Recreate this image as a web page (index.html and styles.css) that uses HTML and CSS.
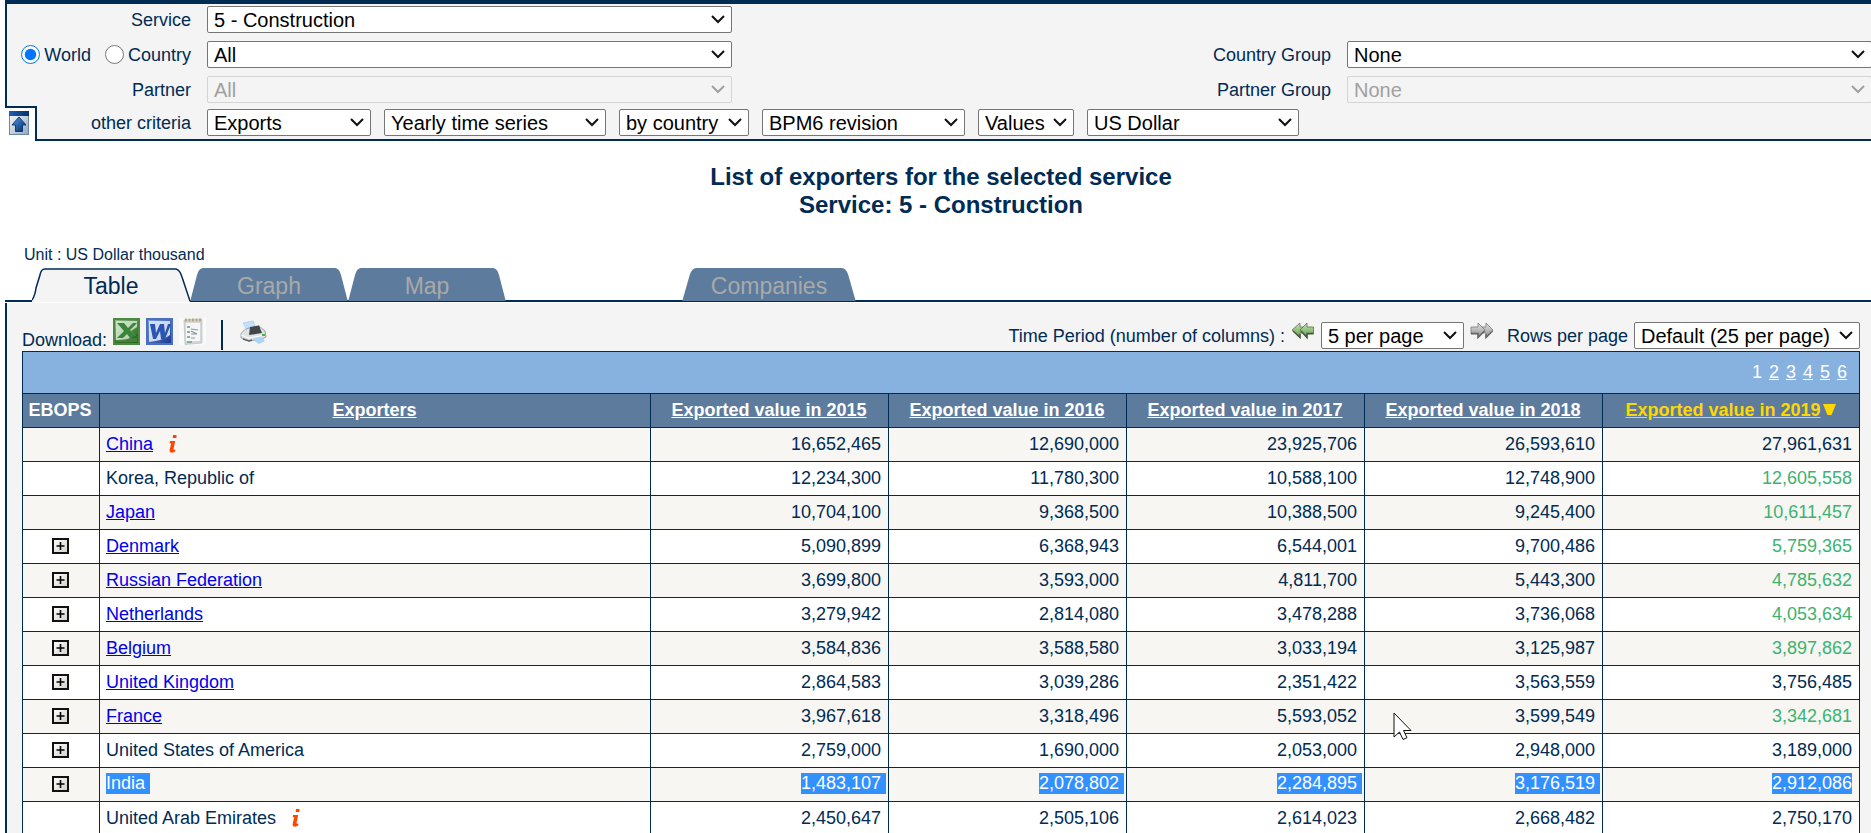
FILE: index.html
```html
<!DOCTYPE html>
<html lang="en">
<head>
<meta charset="utf-8">
<title>List of exporters for the selected service</title>
<link rel="stylesheet" href="styles.css">
</head>
<body>
<svg class="defs" aria-hidden="true">
  <defs>
    <linearGradient id="g-plus" x1="0" y1="0" x2="1" y2="1"><stop offset="0" stop-color="#ffffff"/><stop offset="1" stop-color="#d2cfc8"/></linearGradient>
    <linearGradient id="g-up" x1="0" y1="0" x2="1" y2="1"><stop offset="0" stop-color="#ffffff"/><stop offset="1" stop-color="#8fa6c0"/></linearGradient>
    <linearGradient id="g-bar" x1="0" y1="0" x2="1" y2="0"><stop offset="0" stop-color="#1c5fb5"/><stop offset="1" stop-color="#0a2f66"/></linearGradient>
    <linearGradient id="g-arrow" x1="0" y1="0" x2="1" y2="1"><stop offset="0" stop-color="#4fa0f5"/><stop offset="1" stop-color="#08244f"/></linearGradient>
    <linearGradient id="g-xls" x1="0" y1="0" x2="1" y2="1"><stop offset="0" stop-color="#8fc08a"/><stop offset="1" stop-color="#1f5c12"/></linearGradient>
    <linearGradient id="g-doc" x1="0" y1="0" x2="1" y2="1"><stop offset="0" stop-color="#7da2e8"/><stop offset="1" stop-color="#14368c"/></linearGradient>
    <linearGradient id="g-green" x1="0" y1="0" x2="0" y2="1"><stop offset="0" stop-color="#c4e6ac"/><stop offset="1" stop-color="#5d9a4c"/></linearGradient>
    <linearGradient id="g-grey" x1="0" y1="0" x2="0" y2="1"><stop offset="0" stop-color="#e4e4e4"/><stop offset="1" stop-color="#8a8a8a"/></linearGradient>
    <symbol id="plus" viewBox="0 0 17 16"><rect x="1" y="1" width="15" height="14" fill="url(#g-plus)" stroke="#111" stroke-width="2"/><path d="M8.500 4v8M4.500 8h8" stroke="#000" stroke-width="1.600"/></symbol>
    <symbol id="info" viewBox="0 0 8 18"><path d="M4 0h3.500v3H3.700zM1 6h5.200L4.600 13.500c-.2 1.200.3 1.500 1.900.9L6.100 16.600C3.500 18.500.3 18 .6 15.200L2.200 8.200H.6z" fill="#ff4500"/></symbol>
    <symbol id="tab-off" viewBox="0 0 158 34" preserveAspectRatio="none"><path d="M0 34 L7 7 Q9 0 13 0 H145 Q149 0 151 7 L158 34Z" fill="#5d7b9d"/><path d="M0 33.500H158" stroke="#002b54"/></symbol>
    <symbol id="tab-on" viewBox="0 0 158 34" preserveAspectRatio="none"><path d="M0 34V32 L7 7 Q9 1 13 1 H144 Q148 1 150 7 L158 34Z" fill="#f4f4f4"/><path d="M0 32 Q3 28 4 20 L8 7 Q9 1 13 1 H144 Q148 2 150 9 L158 33" fill="none" stroke="#002b54" stroke-width="1.500"/></symbol>
  </defs>
</svg>

<form class="filters">
  <div class="filters-main">
    <div class="row">
      <label class="name" for="service">Service</label>
      <select id="service"><option>5 - Construction</option></select>
    </div>
    <div class="row">
      <div class="scope">
        <label><input type="radio" name="scope" checked>World</label>
        <label><input type="radio" name="scope">Country</label>
      </div>
      <select aria-label="Country"><option>All</option></select>
      <label class="name" for="cgroup">Country Group</label>
      <select id="cgroup"><option>None</option></select>
    </div>
    <div class="row">
      <label class="name" for="partner">Partner</label>
      <select id="partner" disabled><option>All</option></select>
      <label class="name" for="pgroup">Partner Group</label>
      <select id="pgroup" disabled><option>None</option></select>
    </div>
  </div>
  <div class="filters-more">
    <button type="button" class="fold" aria-label="Hide criteria">
      <svg width="20" height="24" viewBox="0 0 20 24"><rect x=".5" y=".5" width="19" height="23" fill="url(#g-up)" stroke="#6d86aa"/><rect width="20" height="5" fill="url(#g-bar)"/><path d="M10 6l7 8h-3.500v6.500h-7V14H3z" fill="url(#g-arrow)" stroke="#0d3c7c"/></svg>
    </button>
    <div class="criteria">
      <label class="name" for="flow">other criteria</label>
      <div class="choices">
        <select id="flow" class="w-flow"><option>Exports</option></select>
        <select class="w-series" aria-label="Series"><option>Yearly time series</option></select>
        <select class="w-by" aria-label="Grouping"><option>by country</option></select>
        <select class="w-rev" aria-label="Revision"><option>BPM6 revision</option></select>
        <select class="w-kind" aria-label="Indicator"><option>Values</option></select>
        <select class="w-cur" aria-label="Currency"><option>US Dollar</option></select>
      </div>
    </div>
  </div>
</form>

<h1>List of exporters for the selected service<br>Service: 5 - Construction</h1>

<p class="unit">Unit : US Dollar thousand</p>

<nav class="tabs">
  <button type="button" class="tab on"><svg><use href="#tab-on"/></svg><span>Table</span></button>
  <button type="button" class="tab"><svg><use href="#tab-off"/></svg><span>Graph</span></button>
  <button type="button" class="tab"><svg><use href="#tab-off"/></svg><span>Map</span></button>
  <button type="button" class="tab far"><svg><use href="#tab-off"/></svg><span>Companies</span></button>
</nav>

<main class="panel">
  <div class="toolbar">
    <div class="download">
      <span>Download:</span>
      <button type="button" aria-label="Excel"><svg width="27" height="27" viewBox="0 0 27 27"><rect x="1" y="1" width="25" height="25" fill="url(#g-xls)" stroke="#4c8a41" stroke-width="2"/><path d="M3 3h21v6l-6 4 6 6v5H3z" fill="#e4f0df" opacity=".75"/><path d="M4 5h7l4 5 5-5h4l-7 7 8 8h-8l-3-4-4 4H4l7-7z" fill="#39853a"/><path d="M2 22c9 0 16-1 23-6v9H2z" fill="#2c6a20" opacity=".8"/></svg></button>
      <button type="button" aria-label="Word"><svg width="27" height="27" viewBox="0 0 27 27"><rect x="1" y="1" width="25" height="25" fill="url(#g-doc)" stroke="#4c6fc0" stroke-width="2"/><path d="M3 3h21v14c-6 4-12 6-21 7z" fill="#e6edfb" opacity=".85"/><path d="M4 6h5l1 9 4-9h4l1 9 3-9h3l-6 15h-4l-1-8-4 8H7z" fill="#2a55b0"/></svg></button>
      <button type="button" aria-label="Text"><svg width="27" height="27" viewBox="0 0 27 27"><rect width="27" height="27" fill="#fafafa"/><path d="M5 2l18-1v24l-17 1.500z" fill="#d3d7da" stroke="#b9bec2" stroke-width=".7"/><path d="M7 5h14v18H7z" fill="#f4f6f7"/><path d="M6 2h17" stroke="#b9a878" stroke-width="3" stroke-dasharray="2 1.500"/><path d="M8 9h3M8 14h3M8 19h3M8 24h5" stroke="#86b09a" stroke-width="1.800"/><path d="M12 11l7 1M12 13l6 3M12 16h6M12 20h4" stroke="#8d959b" stroke-width="1.200"/></svg></button>
      <i class="bar"></i>
      <button type="button" aria-label="Print"><svg width="27" height="25" viewBox="0 0 27 25"><path d="M3 3l10-2 3 7-8 4z" fill="#c3e1fb" stroke="#9cc4e8" stroke-width=".6"/><path d="M1 14c2-4 5-5 8-6l10-2 6 5 1 6-4 2-13 2-8-3z" fill="#dfe1e2" stroke="#8b8f92" stroke-width=".8"/><path d="M10 7l9-1.500 3 7.500-13 2z" fill="#43474a"/><path d="M1 15l8 3 16-3" fill="none" stroke="#fff"/><path d="M3 19l6 2 3-1" fill="none" stroke="#5d6163" stroke-width="1.500"/><path d="M12 19l9-2 4 4-6 3z" fill="#a9d4fa"/><rect x="22" y="14" width="3" height="2" fill="#41b83c"/></svg></button>
    </div>
    <div class="paging">
      <label for="cols">Time Period (number of columns) :</label>
      <button type="button" aria-label="Previous years"><svg width="24" height="18" viewBox="0 0 24 18"><g stroke="#5f6f58" stroke-width=".8"><path d="M1 8l8-7v4h4v6H9v5z" fill="url(#g-green)"/><path d="M9 8l7-7v4h6.500v7H16v4z" fill="url(#g-green)"/></g><path d="M2 9l7 6.500v-3.500M10 9l6 6.500v-4h6.500" fill="none" stroke="#4c5647" stroke-width="1.500"/></svg></button>
      <select id="cols" class="w-cols"><option>5 per page</option></select>
      <button type="button" aria-label="Next years"><svg width="24" height="18" viewBox="0 0 24 18"><g stroke="#777" stroke-width=".8"><path d="M23 8l-7-7v4h-5v6h5v5z" fill="url(#g-grey)"/><path d="M15 8L8 1v4H1v7h7v4z" fill="url(#g-grey)"/></g><path d="M22.500 9L16 15.500V12M14.500 9L8 15.500v-4H1" fill="none" stroke="#666" stroke-width="1.500"/></svg></button>
      <label class="rows" for="rows">Rows per page</label>
      <select id="rows" class="w-rows"><option>Default (25 per page)</option></select>
    </div>
  </div>

  <table>
    <colgroup><col class="c-code"><col><col class="c-val"><col class="c-val"><col class="c-val"><col class="c-val"><col class="c-last"></colgroup>
    <thead>
      <tr class="pages"><td colspan="7"><div><span>1</span><a href="#">2</a><a href="#">3</a><a href="#">4</a><a href="#">5</a><a href="#">6</a></div></td></tr>
      <tr><th>EBOPS</th><th><a href="#">Exporters</a></th><th><a href="#">Exported value in 2015</a></th><th><a href="#">Exported value in 2016</a></th><th><a href="#">Exported value in 2017</a></th><th><a href="#">Exported value in 2018</a></th><th class="sorted"><a href="#">Exported value in 2019</a><svg width="15" height="12" viewBox="0 0 15 12"><path d="M2 0h13L10.500 11h-4z" fill="#ffd700"/></svg></th></tr>
    </thead>
    <tbody>
      <tr><td></td><td><a href="#">China</a><svg class="info"><use href="#info"/></svg></td><td>16,652,465</td><td>12,690,000</td><td>23,925,706</td><td>26,593,610</td><td>27,961,631</td></tr>
      <tr><td></td><td>Korea, Republic of</td><td>12,234,300</td><td>11,780,300</td><td>10,588,100</td><td>12,748,900</td><td class="est">12,605,558</td></tr>
      <tr><td></td><td><a href="#">Japan</a></td><td>10,704,100</td><td>9,368,500</td><td>10,388,500</td><td>9,245,400</td><td class="est">10,611,457</td></tr>
      <tr><td><button type="button" aria-label="Expand"><svg><use href="#plus"/></svg></button></td><td><a href="#">Denmark</a></td><td>5,090,899</td><td>6,368,943</td><td>6,544,001</td><td>9,700,486</td><td class="est">5,759,365</td></tr>
      <tr><td><button type="button" aria-label="Expand"><svg><use href="#plus"/></svg></button></td><td><a href="#">Russian Federation</a></td><td>3,699,800</td><td>3,593,000</td><td>4,811,700</td><td>5,443,300</td><td class="est">4,785,632</td></tr>
      <tr><td><button type="button" aria-label="Expand"><svg><use href="#plus"/></svg></button></td><td><a href="#">Netherlands</a></td><td>3,279,942</td><td>2,814,080</td><td>3,478,288</td><td>3,736,068</td><td class="est">4,053,634</td></tr>
      <tr><td><button type="button" aria-label="Expand"><svg><use href="#plus"/></svg></button></td><td><a href="#">Belgium</a></td><td>3,584,836</td><td>3,588,580</td><td>3,033,194</td><td>3,125,987</td><td class="est">3,897,862</td></tr>
      <tr><td><button type="button" aria-label="Expand"><svg><use href="#plus"/></svg></button></td><td><a href="#">United Kingdom</a></td><td>2,864,583</td><td>3,039,286</td><td>2,351,422</td><td>3,563,559</td><td>3,756,485</td></tr>
      <tr><td><button type="button" aria-label="Expand"><svg><use href="#plus"/></svg></button></td><td><a href="#">France</a></td><td>3,967,618</td><td>3,318,496</td><td>5,593,052</td><td>3,599,549</td><td class="est">3,342,681</td></tr>
      <tr><td><button type="button" aria-label="Expand"><svg><use href="#plus"/></svg></button></td><td>United States of America</td><td>2,759,000</td><td>1,690,000</td><td>2,053,000</td><td>2,948,000</td><td>3,189,000</td></tr>
      <tr class="picked"><td><button type="button" aria-label="Expand"><svg><use href="#plus"/></svg></button></td><td><span>India</span></td><td><span>1,483,107</span></td><td><span>2,078,802</span></td><td><span>2,284,895</span></td><td><span>3,176,519</span></td><td><span>2,912,086</span></td></tr>
      <tr><td></td><td>United Arab Emirates<svg class="info"><use href="#info"/></svg></td><td>2,450,647</td><td>2,505,106</td><td>2,614,023</td><td>2,668,482</td><td>2,750,170</td></tr>
    </tbody>
  </table>
</main>

<svg class="pointer" width="19" height="28" viewBox="0 0 19 28"><path d="M1 1v24l5.500-5 3.500 7.500 4-1.800L10.500 18.500H18z" fill="#fff" stroke="#111"/></svg>
</body>
</html>
```
FILE: styles.css
```css
* { box-sizing: border-box; }

html { overflow: hidden; }

body {
  margin: 0;
  padding-left: 5px;
  background: #fff;
  color: #002b54;
  font: 18px/20px "Liberation Sans", Arial, sans-serif;
}

.defs { position: absolute; width: 0; height: 0; }

button {
  padding: 0;
  border: 0;
  background: none;
  font: inherit;
  color: inherit;
}

button svg { display: block; }

select {
  height: 27px;
  margin: 0;
  padding: 0 6px;
  appearance: none;
  border: 1px solid #767676;
  border-radius: 2px;
  background: #fff url("data:image/svg+xml,%3Csvg xmlns='http://www.w3.org/2000/svg' width='14' height='9'%3E%3Cpath d='M1 1l6 6 6-6' fill='none' stroke='%23111' stroke-width='2'/%3E%3C/svg%3E") no-repeat right 6px center;
  color: #000;
  font: 20px "Liberation Sans", Arial, sans-serif;
}

select:disabled {
  border-color: #d4d4d4;
  background-color: #f4f4f4;
  background-image: url("data:image/svg+xml,%3Csvg xmlns='http://www.w3.org/2000/svg' width='14' height='9'%3E%3Cpath d='M1 1l6 6 6-6' fill='none' stroke='%23a0a0a0' stroke-width='2'/%3E%3C/svg%3E");
  color: #a0a0a0;
  opacity: 1;
}

/* Filters */
.filters { border-top: 4px solid #002b54; }

.filters-main {
  display: grid;
  gap: 8px;
  padding: 2px 0 3px;
  border-left: 2px solid #002b54;
  background: #f4f4f4;
}

.row {
  display: grid;
  grid-template-columns: 184px 525px 1fr 525px;
  column-gap: 16px;
  align-items: center;
  margin-right: -1px;
}

.name { text-align: right; }

.scope {
  display: flex;
  justify-content: flex-end;
  gap: 14px;
}

.scope label { display: flex; align-items: center; gap: 4px; }

.scope input { width: 19px; height: 19px; margin: 0; }

.filters-more { display: flex; background: #f4f4f4; }

.fold {
  display: flex;
  width: 32px;
  padding: 3px 4px;
  border: solid #002b54;
  border-width: 2px 2px 0 0;
  background: #fff;
}

.criteria {
  display: grid;
  flex: 1;
  grid-template-columns: 154px 1fr;
  column-gap: 16px;
  align-items: center;
  padding: 3px 0;
  border-bottom: 2px solid #002b54;
}

.choices { display: flex; gap: 13px; }

.w-flow { width: 164px; }
.w-series { width: 222px; }
.w-by { width: 130px; }
.w-rev { width: 203px; }
.w-kind { width: 96px; }
.w-cur { width: 212px; }
.w-cols { width: 143px; }
.w-rows { width: 226px; }

/* Heading */
h1 {
  margin: 22px 0 27px;
  padding-left: 6px;
  font-size: 24px;
  line-height: 28px;
  text-align: center;
}

.unit {
  margin: 0 0 4px 19px;
  font-size: 16px;
  line-height: 18px;
}

/* Tabs */
.tabs {
  display: flex;
  padding-left: 27px;
  border-bottom: 2px solid #002b54;
}

.tab {
  display: grid;
  width: 158px;
  height: 34px;
  margin-bottom: -2px;
  color: #a9a9a9;
  font-size: 23px;
  line-height: 36px;
}

.tab > * { grid-area: 1 / 1; }
.tab svg { width: 100%; height: 34px; }
.tab.on { color: #002b54; }
.tab.far { width: 174px; margin-left: 176px; }

/* Panel */
.panel {
  margin-top: 1px;
  padding: 0 11px 0 15px;
  border-left: 2px solid #002b54;
  background: #f4f4f4;
}

.toolbar {
  display: flex;
  justify-content: space-between;
  align-items: flex-end;
  height: 48px;
}

.download { display: flex; align-items: flex-end; gap: 6px; padding-bottom: 1px; }
.download button { margin-bottom: 5px; }
.download .bar { width: 2px; height: 30px; margin: 0 11px 0 9px; background: #002b54; }

.paging { display: flex; align-items: center; gap: 6px; padding-bottom: 2px; }
.paging button { margin-bottom: 9px; }
.paging button + .rows { margin-left: 7px; }

table {
  width: 100%;
  table-layout: fixed;
  border-collapse: collapse;
}

.c-code { width: 77px; }
.c-val { width: 238px; }
.c-last { width: 257px; }

td, th {
  height: 34px;
  padding: 0 7px 2px 6px;
  border: 1px solid #002b54;
}

th { background: #5d7b9d; color: #fff; white-space: nowrap; }
th:first-child { padding: 0 2px 2px 0; }
th a { color: inherit; }
th.sorted { color: #ffd700; }

.pages td { height: 42px; background: #87b1df; color: #fff; }
.pages div { display: flex; justify-content: flex-end; gap: 7px; padding-right: 5px; }
.pages a { color: inherit; }

tbody td { text-align: right; background: #fff; }
tbody tr:nth-child(odd) td { background: #f7f6f3; }
tbody td:first-child { padding: 0 2px 2px 0; text-align: center; }
tbody td:nth-child(2) { text-align: left; }
tbody a { color: #0000ee; }
tbody .est { color: #3cb371; }
tbody button { display: block; margin: 0 auto; }
tbody button svg { width: 17px; height: 16px; }

.info {
  width: 8px;
  height: 18px;
  margin-left: 16px;
  vertical-align: -3px;
}

.picked span {
  display: inline-block;
  margin-right: -5px;
  padding-right: 5px;
  background: #3390ff;
  color: #fff;
  line-height: 21px;
}

.picked td:last-child span { margin-right: 0; padding-right: 0; }

.pointer { position: absolute; left: 1393px; top: 712px; }
```
